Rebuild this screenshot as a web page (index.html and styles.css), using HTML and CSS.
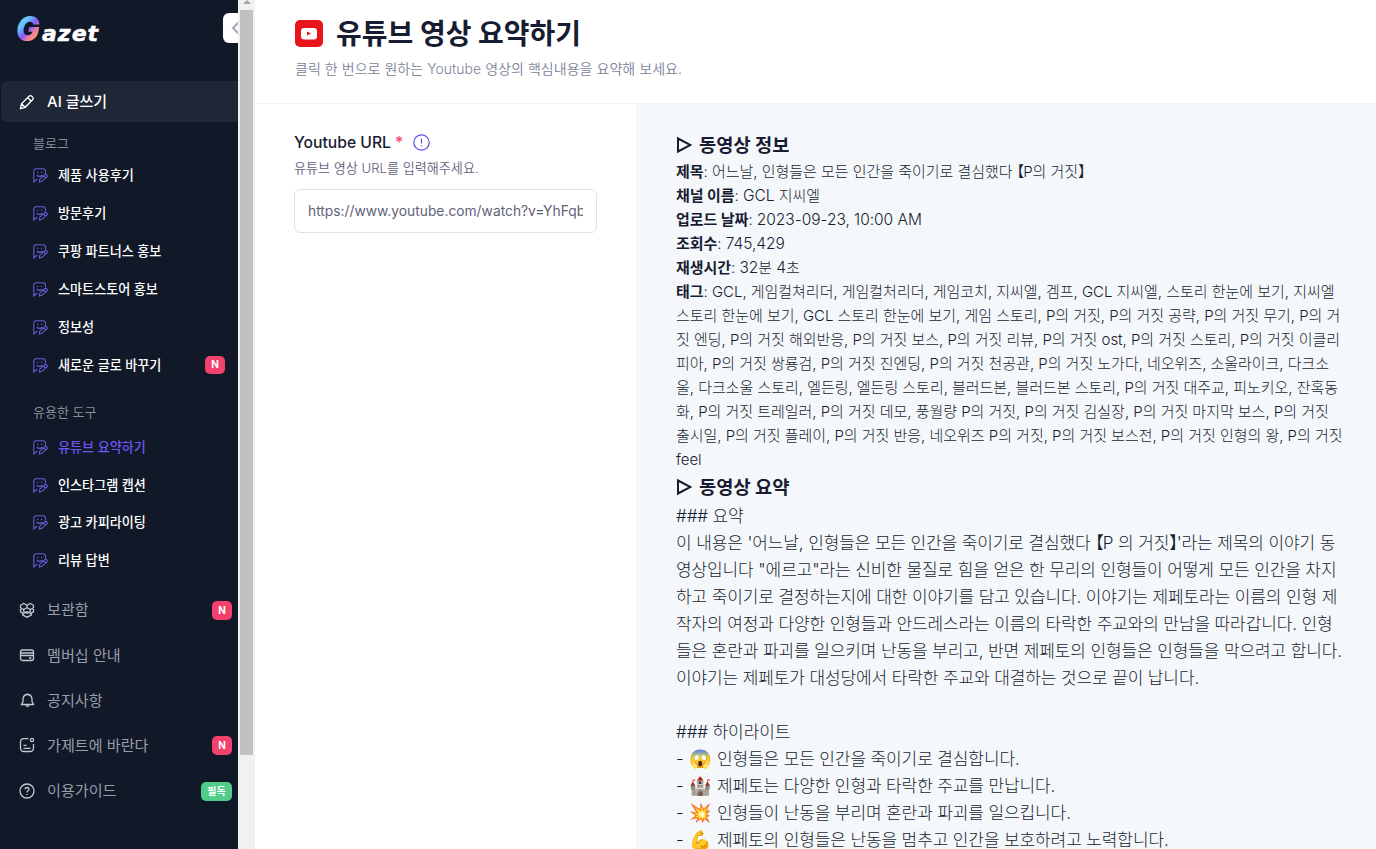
FILE: index.html
```html
<!DOCTYPE html>
<html lang="ko">

<head>
  <meta charset="UTF-8">
  <title>Gazet</title>
  <link rel="stylesheet" href="styles.css">
</head>

<body>
  <svg class="defs" width="0" height="0">
    <symbol id="write" viewBox="0 0 15 15">
      <path d="M4.500 11.500H3.500L.8 14V3.500Q.8 .8 3.500 .8h6.300Q12.500 .8 12.500 3.500v2M4.700 3.800v1.200M8.600 3.800v1.200M3.800 7q2.800 2.800 5.600 0M6.300 14l.5-2.800 5-4.500q1-.8 2 .2t.1 2L9 13.300zM10.500 8l2 2" />
    </symbol>
  </svg>
  <div class="page">
    <nav class="sidebar">
      <div class="brand">
        <div class="logo"><span class="logo-g">G</span><span class="logo-rest">azet</span></div>
        <button class="collapse"><svg width="10" height="16" viewBox="0 0 10 16"><path d="M8 2L2 8l6 6" /></svg></button>
      </div>
      <div class="menu-open">
        <svg class="icon" viewBox="0 0 16 16"><path d="M1.500 14.500l1-4.700L10 2.300q1.500-1.400 3.200.3t.3 3.200L6.200 13.300zM8.800 3.800l3.400 3.400M2.800 10l3.200 3.200" /></svg>
        <span>AI 글쓰기</span>
      </div>
      <div class="group">블로그</div>
      <ul class="sub">
        <li><svg><use href="#write" /></svg><span>제품 사용후기</span></li>
        <li><svg><use href="#write" /></svg><span>방문후기</span></li>
        <li><svg><use href="#write" /></svg><span>쿠팡 파트너스 홍보</span></li>
        <li><svg><use href="#write" /></svg><span>스마트스토어 홍보</span></li>
        <li><svg><use href="#write" /></svg><span>정보성</span></li>
        <li><svg><use href="#write" /></svg><span>새로운 글로 바꾸기</span><b class="badge">N</b></li>
      </ul>
      <div class="group group-tools">유용한 도구</div>
      <ul class="sub sub-tools">
        <li class="active"><svg><use href="#write" /></svg><span>유튜브 요약하기</span></li>
        <li><svg><use href="#write" /></svg><span>인스타그램 캡션</span></li>
        <li><svg><use href="#write" /></svg><span>광고 카피라이팅</span></li>
        <li><svg><use href="#write" /></svg><span>리뷰 답변</span></li>
      </ul>
      <ul class="menu">
        <li>
          <svg class="icon" viewBox="0 0 16 16"><path d="M4.700 1.500L8 3.300l3.300-1.800 3.200 1.800v2.400L11.300 7.500 8 5.700 4.700 7.500 1.500 5.700V3.300zM8 3.300v2.400M4.700 7.500v2L8 11.300l3.300-1.800v-2M3 6.600L1.500 7.500v2.300l3 1.700L8 9.500M13 6.600l1.500.9v2.300l-3 1.700L8 9.500M3.700 11v2L8 15.200l4.300-2.200v-2" /></svg>
          <span>보관함</span><b class="badge">N</b>
        </li>
        <li>
          <svg class="icon" viewBox="0 0 16 16"><rect x="1.500" y="3" width="13" height="10.500" rx="2" /><path d="M1.500 6h13M1.500 8.500h13M10 11h2.500" /></svg>
          <span>멤버십 안내</span>
        </li>
        <li>
          <svg class="icon" viewBox="0 0 16 16"><path d="M8.500 1.200v1.300M2.500 12.500h12L13 9.500V7q-.5-4.500-4.500-4.500T4 7v2.500zM6.800 13q1.700 3 3.400 0" /></svg>
          <span>공지사항</span>
        </li>
        <li>
          <svg class="icon" viewBox="0 0 16 16"><path d="M9.500 1.700H5Q1.500 1.700 1.500 5v6q0 3.500 3.500 3.500h6q3.500 0 3.500-3.500V7M4.500 8.300h3M4.500 11.300h7" /><circle cx="13" cy="3" r="1.600" /></svg>
          <span>가제트에 바란다</span><b class="badge">N</b>
        </li>
        <li>
          <svg class="icon" viewBox="0 0 16 16"><circle cx="8" cy="8" r="7" /><path d="M6 6.300Q6.200 4.500 8 4.500t2 1.700Q10 7.500 8.700 8 8 8.400 8 9.400M8 11v1" /></svg>
          <span>이용가이드</span><b class="badge badge-green">필독</b>
        </li>
      </ul>
    </nav>
    <div class="scrollbar">
      <div class="scroll-up"></div>
      <div class="thumb"></div>
    </div>

    <main class="main">
      <header class="header">
        <h1>
          <svg width="28" height="27" viewBox="0 0 28 27"><rect width="28" height="27" rx="5" fill="#e9151d" /><rect x="6" y="8" width="16" height="11.500" rx="3" fill="#fff" /><path d="M12 11.500v4l4-2z" fill="#e9151d" /></svg>
          <span>유튜브 영상 요약하기</span>
        </h1>
        <p>클릭 한 번으로 원하는 Youtube 영상의 핵심내용을 요약해 보세요.</p>
      </header>
      <div class="columns">
        <section class="form">
          <label for="url">Youtube URL <i>*</i>
            <svg width="17" height="17" viewBox="0 0 17 17"><circle cx="8.500" cy="8.500" r="7.700" /><path d="M8.500 4.500v5M8.500 11.200v1.200" /></svg>
          </label>
          <p>유튜브 영상 URL를 입력해주세요.</p>
          <input type="text" id="url" value="https://www.youtube.com/watch?v=YhFqbXk2">
        </section>
        <section class="result">
          <h2><svg width="16" height="18" viewBox="0 0 16 18"><path d="M2 2.500v13L14.500 9z" /></svg><span>동영상 정보</span></h2>
          <div class="info">
            <div><b>제목</b>: 어느날, 인형들은 모든 인간을 죽이기로 결심했다 <span class="bracket">【</span>P의 거짓<span class="bracket">】</span></div>
            <div><b>채널 이름</b>: <span class="en">GCL</span> 지씨엘</div>
            <div><b>업로드 날짜</b>: <span class="en">2023-09-23, 10:00 AM</span></div>
            <div><b>조회수</b>: <span class="en">745,429</span></div>
            <div><b>재생시간</b>: <span class="en">32</span>분 <span class="en">4</span>초</div>
            <div><b>태그</b>: GCL, 게임컬쳐리더, 게임컬처리더, 게임코치, 지씨엘, 겜프, GCL 지씨엘, 스토리 한눈에 보기, 지씨엘<br>
              스토리 한눈에 보기, GCL 스토리 한눈에 보기, 게임 스토리, P의 거짓, P의 거짓 공략, P의 거짓 무기, P의 거<br>
              짓 엔딩, P의 거짓 해외반응, P의 거짓 보스, P의 거짓 리뷰, P의 거짓 ost, P의 거짓 스토리, P의 거짓 이클리<br>
              피아, P의 거짓 쌍룡검, P의 거짓 진엔딩, P의 거짓 천공관, P의 거짓 노가다, 네오위즈, 소울라이크, 다크소<br>
              울, 다크소울 스토리, 엘든링, 엘든링 스토리, 블러드본, 블러드본 스토리, P의 거짓 대주교, 피노키오, 잔혹동<br>
              화, P의 거짓 트레일러, P의 거짓 데모, 풍월량 P의 거짓, P의 거짓 김실장, P의 거짓 마지막 보스, P의 거짓<br>
              출시일, P의 거짓 플레이, P의 거짓 반응, 네오위즈 P의 거짓, P의 거짓 보스전, P의 거짓 인형의 왕, P의 거짓<br>
              feel</div>
          </div>
          <h2><svg width="16" height="18" viewBox="0 0 16 18"><path d="M2 2.500v13L14.500 9z" /></svg><span>동영상 요약</span></h2>
          <div class="summary">
            ### 요약<br>
            이 내용은 '어느날, 인형들은 모든 인간을 죽이기로 결심했다 <span class="bracket">【</span>P 의 거짓<span class="bracket">】</span>'라는 제목의 이야기 동<br>
            영상입니다 "에르고"라는 신비한 물질로 힘을 얻은 한 무리의 인형들이 어떻게 모든 인간을 차지<br>
            하고 죽이기로 결정하는지에 대한 이야기를 담고 있습니다. 이야기는 제페토라는 이름의 인형 제<br>
            작자의 여정과 다양한 인형들과 안드레스라는 이름의 타락한 주교와의 만남을 따라갑니다. 인형<br>
            들은 혼란과 파괴를 일으키며 난동을 부리고, 반면 제페토의 인형들은 인형들을 막으려고 합니다.<br>
            이야기는 제페토가 대성당에서 타락한 주교와 대결하는 것으로 끝이 납니다.<br>
            <br>
            ### 하이라이트<br>
            - <span class="emoji">😱</span> 인형들은 모든 인간을 죽이기로 결심합니다.<br>
            - <span class="emoji">🏰</span> 제페토는 다양한 인형과 타락한 주교를 만납니다.<br>
            - <span class="emoji">💥</span> 인형들이 난동을 부리며 혼란과 파괴를 일으킵니다.<br>
            - <span class="emoji">💪</span> 제페토의 인형들은 난동을 멈추고 인간을 보호하려고 노력합니다.
          </div>
        </section>
      </div>
    </main>
  </div>
</body>

</html>
```
FILE: styles.css
```css
* {
  box-sizing: border-box;
}

body {
  margin: 0;
  font-family: Inter, "Noto Sans CJK KR", sans-serif;
  color: #181c32;
  overflow: hidden;
}

ul, p, h1, h2 {
  margin: 0;
  padding: 0;
  list-style: none;
}

svg {
  flex-shrink: 0;
}

.defs {
  display: block;
  height: 0;
}

.page {
  display: flex;
  height: 849px;
}

.sidebar {
  width: 238px;
  background: #111827;
  overflow: hidden;
}

.brand {
  display: flex;
  justify-content: space-between;
  height: 81px;
  padding: 13px 0 0 16px;
}

.logo {
  display: flex;
  align-items: baseline;
  height: 31px;
  line-height: 31px;
  font-style: italic;
  color: #fff;
}

.logo-g {
  width: 31px;
  margin-right: -5px;
  font-size: 34px;
  font-weight: 900;
  transform: scaleX(0.92);
  transform-origin: left;
  background: linear-gradient(135deg, #64c8ff 30%, #7d5cff 48%, #f17ba0 62%, #ffa55c 75%);
  -webkit-background-clip: text;
  background-clip: text;
  color: transparent;
}

.logo-rest {
  font-family: "DejaVu Sans", sans-serif;
  font-weight: bold;
  font-size: 22px;
  letter-spacing: 1px;
  -webkit-text-stroke: 0.5px #fff;
}

.collapse {
  width: 15px;
  height: 30px;
  padding: 0 0 0 8px;
  border: none;
  border-radius: 6px 0 0 6px;
  background: #fff;
  overflow: hidden;
}

.collapse svg {
  display: block;
  fill: none;
  stroke: #a1a5b7;
  stroke-width: 2;
}

.icon {
  width: 16px;
  height: 16px;
  margin-right: 12px;
  fill: none;
  stroke: currentColor;
  stroke-width: 1.3;
}

.menu-open {
  display: flex;
  align-items: center;
  height: 41px;
  margin-left: 1px;
  padding-left: 18px;
  border-radius: 6px 0 0 6px;
  background: #1f2635;
  color: #fff;
  font-size: 15px;
  font-weight: 500;
}

.menu-open span,
.sub span,
.menu span {
  padding-bottom: 2px;
}

.group {
  height: 34px;
  padding: 5px 0 0 33px;
  line-height: 32px;
  font-size: 13px;
  color: #888c9c;
}

.group-tools {
  height: 44px;
  padding-top: 12px;
}

.sub li {
  display: flex;
  align-items: center;
  height: 38px;
  padding: 0 13px 0 33px;
  font-size: 13.1px;
  font-weight: 500;
  color: #fff;
}

.sub svg {
  width: 15px;
  height: 15px;
  margin: 1px 10px 0 0;
  fill: none;
  stroke: #695cd8;
  stroke-width: 1.1;
}

.sub-tools li {
  height: 37.7px;
}

.sub-tools span {
  padding-bottom: 1px;
}

.sub .active {
  color: #6e56f5;
}

.menu {
  padding-top: 8px;
}

.menu li {
  display: flex;
  align-items: center;
  height: 45.2px;
  padding: 0 6px 0 19px;
  font-size: 15.1px;
  color: #9a9dab;
}

.menu .icon {
  margin-top: 1px;
  color: #c3c6d3;
}

.badge {
  width: 20px;
  height: 18px;
  margin-left: auto;
  border-radius: 5px;
  background: #f1416c;
  color: #fff;
  font-size: 10px;
  line-height: 17px;
  text-align: center;
}

.menu .badge {
  height: 19px;
  margin-top: 2px;
  line-height: 18px;
}

.menu .badge-green {
  width: 31px;
  background: #50cd89;
}

.scrollbar {
  width: 17px;
  padding: 0 2px;
  background: #f1f1f1;
}

.scroll-up {
  width: 8px;
  height: 4px;
  margin: 0 0 6px 3px;
  border: 4px solid transparent;
  border-top: 0;
  border-bottom-color: #a3a3a3;
}

.thumb {
  height: 745px;
  background: #c1c1c1;
}

.main {
  flex: 1;
  display: flex;
  flex-direction: column;
}

.header {
  height: 104px;
  padding: 13px 0 0 40px;
  border-bottom: 1px solid #eff2f5;
}

.header h1 {
  display: flex;
  align-items: center;
  gap: 13px;
  height: 41px;
  font-size: 28px;
  font-weight: 700;
}

.header h1 span {
  padding-bottom: 3px;
}

.header p {
  height: 30px;
  line-height: 30px;
  font-size: 14px;
  font-weight: 350;
  letter-spacing: 0.04px;
  color: #7e8299;
}

.columns {
  display: flex;
  flex: 1;
}

.form {
  width: 381px;
  padding: 26px 39px;
}

.form label {
  display: flex;
  align-items: center;
  height: 24px;
  font-size: 15.7px;
  font-weight: 500;
}

.form i {
  margin-left: 4px;
  font-style: normal;
  color: #f1416c;
}

.form label svg {
  margin-left: 10px;
  fill: none;
  stroke: #5d50e6;
  stroke-width: 1.2;
}

.form p {
  height: 35px;
  line-height: 28px;
  font-size: 13.1px;
  font-weight: 350;
  color: #5e6278;
}

.form input {
  width: 303px;
  height: 44px;
  padding: 0 13px 1px;
  border: 1px solid #dfe0e8;
  border-radius: 6px;
  font: 400 13.8px Inter, sans-serif;
  color: #5e6278;
}

.result {
  flex: 1;
  height: 745px;
  padding: 26px 0 0 40px;
  background: #f5f8fa;
  overflow: hidden;
  white-space: nowrap;
}

.result h2 {
  display: flex;
  align-items: center;
  gap: 7px;
  height: 30px;
  font-size: 18.7px;
  font-weight: 700;
}

.result h2 span {
  padding-bottom: 3px;
}

.result h2 svg {
  fill: none;
  stroke: #181c32;
  stroke-width: 2;
}

.info {
  font-size: 15px;
  font-weight: 300;
  line-height: 24px;
  letter-spacing: -0.03px;
}

.info div {
  min-height: 24px;
}

.info b {
  font-weight: 700;
}

.en {
  font-size: 15.5px;
  line-height: 1;
}

/* half-width form of the full-width brackets */
.bracket {
  font-family: "Noto Sans CJK KR", sans-serif;
  font-feature-settings: "halt";
  line-height: 1;
  letter-spacing: -1px;
}

.summary {
  padding-top: 1px;
  font-size: 17px;
  font-weight: 300;
  line-height: 27px;
  letter-spacing: -0.12px;
}

.emoji {
  display: inline-block;
  width: 24px;
  height: 20px;
  padding-left: 1px;
  font-size: 18px;
  line-height: 20px;
}
```
